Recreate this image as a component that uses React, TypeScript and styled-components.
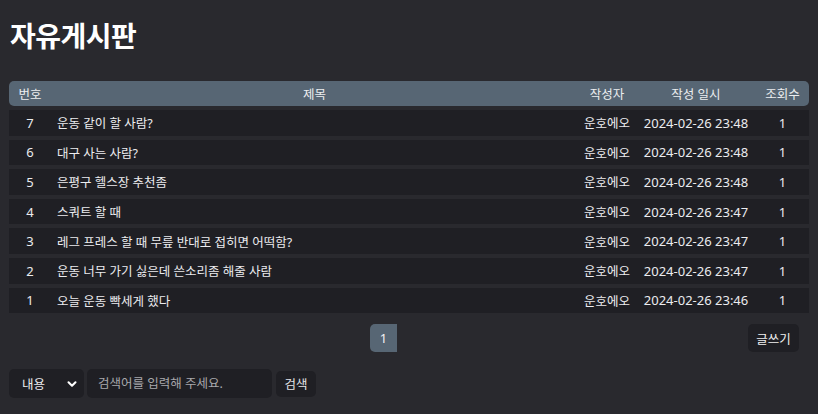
import React from 'react';
import styled, { createGlobalStyle } from 'styled-components';
import { ChevronDown } from 'lucide-react';

const GlobalStyle = createGlobalStyle`
    html, body {
        margin: 0;
        padding: 0;
        background: #29292e;
        color: #e9e9ec;
        font-family: "Noto Sans", "Noto Sans CJK KR", sans-serif;
    }
`;

const Page = styled.div`
    padding: 16px 9px 0;
`;

const Title = styled.h1`
    margin: 0 0 0 1px;
    font-size: 28px;
    line-height: 40px;
    font-weight: 700;
    color: #ffffff;
    letter-spacing: -0.5px;
`;

const Board = styled.div`
    margin-top: 25px;
    display: flex;
    flex-direction: column;
    gap: 4px;
`;

const Row = styled.div<{ $head?: boolean }>`
    display: grid;
    grid-template-columns: 42px 1fr 58px 120px 53px;
    align-items: center;
    height: ${(p) => (p.$head ? '25px' : '25.6px')};
    background: ${(p) => (p.$head ? '#576674' : '#1f1f24')};
    border-radius: ${(p) => (p.$head ? '5px' : '0')};
    font-size: 12.5px;
    color: ${(p) => (p.$head ? '#eceef0' : '#ececef')};
`;

const Cell = styled.div<{ $left?: boolean; $num?: boolean }>`
    text-align: ${(p) => (p.$left ? 'left' : 'center')};
    padding-left: ${(p) => (p.$left ? '6px' : '0')};
    font-size: ${(p) => (p.$num ? '13px' : 'inherit')};
    white-space: nowrap;
`;

const Footer = styled.div`
    display: flex;
    align-items: center;
    margin-top: 11px;
`;

const Pagination = styled.div`
    flex: 1;
    display: flex;
    justify-content: center;
    padding-left: 10px;
`;

const PageButton = styled.button`
    width: 27px;
    height: 28px;
    border: none;
    border-radius: 5px 0 0 5px;
    background: #576674;
    color: #f2f2f2;
    font-family: inherit;
    font-size: 13px;
    padding: 0;
`;

const WriteButton = styled.button`
    width: 51px;
    height: 28px;
    margin-right: 10px;
    border: none;
    border-radius: 5px;
    background: #1f1f24;
    color: #f0f0f0;
    font-family: inherit;
    font-size: 12.5px;
    padding: 0;
`;

const SearchBar = styled.div`
    display: flex;
    align-items: center;
    gap: 3px;
    margin-top: 17px;
`;

const Select = styled.div`
    width: 75px;
    height: 29px;
    box-sizing: border-box;
    display: flex;
    align-items: center;
    justify-content: space-between;
    padding: 0 5px 0 13px;
    border-radius: 5px;
    background: #1f1f24;
    font-size: 12.5px;
    color: #ececef;
`;

const Input = styled.input`
    width: 185px;
    height: 29px;
    box-sizing: border-box;
    border: none;
    border-radius: 5px;
    background: #1f1f24;
    padding: 0 11px;
    font-family: inherit;
    font-size: 12.5px;
    color: #ececef;
    outline: none;
    &::placeholder {
        color: #a9a9ad;
    }
`;

const SearchButton = styled.button`
    width: 40px;
    height: 26px;
    margin-left: 1px;
    border: none;
    border-radius: 5px;
    background: #1f1f24;
    color: #e4e4e8;
    font-family: inherit;
    font-size: 12.5px;
    padding: 0;
`;

const posts = [
    { id: 7, title: '운동 같이 할 사람?', date: '2024-02-26 23:48' },
    { id: 6, title: '대구 사는 사람?', date: '2024-02-26 23:48' },
    { id: 5, title: '은평구 헬스장 추천좀', date: '2024-02-26 23:48' },
    { id: 4, title: '스쿼트 할 때', date: '2024-02-26 23:47' },
    { id: 3, title: '레그 프레스 할 때 무릎 반대로 접히면 어떡함?', date: '2024-02-26 23:47' },
    { id: 2, title: '운동 너무 가기 싫은데 쓴소리좀 해줄 사람', date: '2024-02-26 23:47' },
    { id: 1, title: '오늘 운동 빡세게 했다', date: '2024-02-26 23:46' },
];

export default function App() {
    return (
        <Page>
            <GlobalStyle />
            <Title>자유게시판</Title>
            <Board>
                <Row $head>
                    <Cell>번호</Cell>
                    <Cell>제목</Cell>
                    <Cell>작성자</Cell>
                    <Cell>작성 일시</Cell>
                    <Cell>조회수</Cell>
                </Row>
                {posts.map((post) => (
                    <Row key={post.id}>
                        <Cell $num>{post.id}</Cell>
                        <Cell $left>{post.title}</Cell>
                        <Cell>운호에오</Cell>
                        <Cell $num>{post.date}</Cell>
                        <Cell $num>1</Cell>
                    </Row>
                ))}
            </Board>
            <Footer>
                <Pagination>
                    <PageButton>1</PageButton>
                </Pagination>
                <WriteButton>글쓰기</WriteButton>
            </Footer>
            <SearchBar>
                <Select>
                    <span>내용</span>
                    <ChevronDown size={14} strokeWidth={3.5} color="#ffffff" />
                </Select>
                <Input placeholder="검색어를 입력해 주세요." />
                <SearchButton>검색</SearchButton>
            </SearchBar>
        </Page>
    );
}
